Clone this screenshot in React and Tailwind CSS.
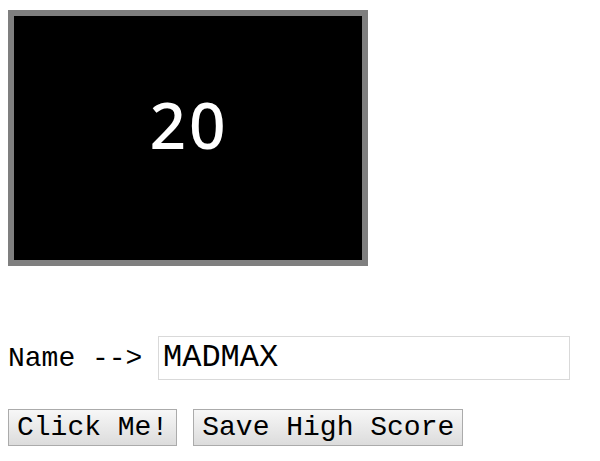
import { useState } from "react";

const mono = "font-['Courier_New','Liberation_Mono',monospace]";

const GameButton = ({ label, onClick }) => (
  <button
    onClick={onClick}
    className={`${mono} h-[37px] px-[8px] text-[28px] leading-none text-black border border-[#ababab] bg-gradient-to-b from-[#f7f7f7] to-[#dcdcdc]`}
  >
    {label}
  </button>
);

export default function App() {
  const [score, setScore] = useState(20);
  const [name, setName] = useState("MADMAX");

  return (
    <div className="min-h-[461px] bg-white px-[8px] pt-[10px]">
      {/* score screen */}
      <div className="w-[360px] h-[256px] border-[6px] border-[#7f7f7f] bg-black">
        <div className="pt-[77px] pl-[2px] text-center font-['Noto_Sans',sans-serif] font-medium text-[64px] leading-[64px] tracking-[3px] text-white">
          {score}
        </div>
      </div>

      <div className="mt-[70px] flex items-baseline">
        <span className={`${mono} w-[150px] text-[28px] text-black`}>Name --&gt;</span>
        <input
          value={name}
          onChange={(e) => setName(e.target.value)}
          className={`${mono} w-[412px] h-[44px] pl-[4px] text-[32px] text-black border border-[#d9d9d9] outline-none`}
        />
      </div>

      <div className="mt-[29px] flex gap-[16px]">
        <GameButton label="Click Me!" onClick={() => setScore((s) => s + 1)} />
        <GameButton label="Save High Score" />
      </div>
    </div>
  );
}
